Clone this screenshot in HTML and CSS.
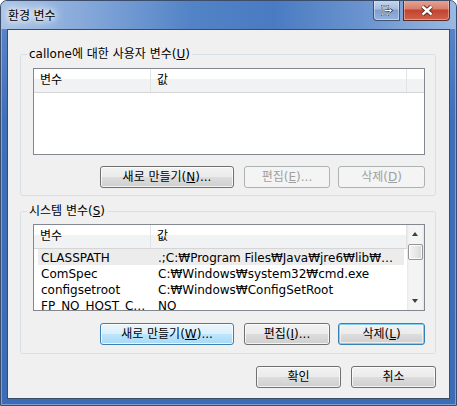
FILE: index.html
```html
<!DOCTYPE html>
<html lang="ko">
<head>
    <meta charset="UTF-8">
    <title>환경 변수</title>
    <link rel="stylesheet" href="styles.css">
</head>
<body>
    <div class="window">
        <div class="titlebar">
            <span class="title">환경 변수</span>
            <div class="caption">
                <button class="cap cap-extra">
                    <svg width="12" height="11" viewBox="0 0 12 11">
                        <rect x="1" y="1" width="6" height="9" fill="none" stroke="#2b3a52" stroke-width="2"/>
                        <rect x="1" y="1" width="6" height="9" fill="none" stroke="#fff" stroke-width="1"/>
                        <path d="M4 5.5 H10 M8 3.5 L10.5 5.5 L8 7.5" fill="none" stroke="#2b3a52" stroke-width="2.2"/>
                        <path d="M4 5.5 H10 M8 3.5 L10.5 5.5 L8 7.5" fill="none" stroke="#fff" stroke-width="1"/>
                    </svg>
                </button>
                <button class="cap cap-close">
                    <svg width="14" height="11" viewBox="0 0 14 11">
                        <path d="M2.5 1.5 L11.5 9.5 M11.5 1.5 L2.5 9.5" stroke="#4a1e18" stroke-width="4.2"/>
                        <path d="M2.5 1.5 L11.5 9.5 M11.5 1.5 L2.5 9.5" stroke="#fff" stroke-width="2.4"/>
                    </svg>
                </button>
            </div>
        </div>

        <div class="client">
            <fieldset class="group">
                <legend>callone에 대한 사용자 변수(<u>U</u>)</legend>
                <div class="listbox">
                    <div class="list-main">
                        <div class="list-header">
                            <span class="hcol hcol-name">변수</span>
                            <span class="hcol hcol-value">값</span>
                            <span class="hcol hcol-rest"></span>
                        </div>
                    </div>
                </div>
                <div class="btn-row">
                    <button class="btn btn-new">새로 만들기(<u>N</u>)...</button>
                    <button class="btn btn-edit" disabled>편집(<u>E</u>)...</button>
                    <button class="btn btn-del" disabled>삭제(<u>D</u>)</button>
                </div>
            </fieldset>

            <fieldset class="group group-system">
                <legend>시스템 변수(<u>S</u>)</legend>
                <div class="listbox">
                    <div class="list-main">
                        <div class="list-header">
                            <span class="hcol hcol-name">변수</span>
                            <span class="hcol hcol-value">값</span>
                        </div>
                        <div class="rows">
                            <div class="row selected"><span class="cell cell-name">CLASSPATH</span><span class="cell cell-value">.;C:₩Program Files₩Java₩jre6₩lib₩ext₩QTJava.zip</span></div>
                            <div class="row"><span class="cell cell-name">ComSpec</span><span class="cell cell-value">C:₩Windows₩system32₩cmd.exe</span></div>
                            <div class="row"><span class="cell cell-name">configsetroot</span><span class="cell cell-value">C:₩Windows₩ConfigSetRoot</span></div>
                            <div class="row"><span class="cell cell-name">FP_NO_HOST_CHECK</span><span class="cell cell-value">NO</span></div>
                        </div>
                    </div>
                    <div class="scrollbar">
                        <div class="sb-arrow sb-up"></div>
                        <div class="sb-track"><div class="sb-thumb"></div></div>
                        <div class="sb-arrow sb-down"></div>
                    </div>
                </div>
                <div class="btn-row">
                    <button class="btn btn-new hover">새로 만들기(<u>W</u>)...</button>
                    <button class="btn btn-edit">편집(<u>I</u>)...</button>
                    <button class="btn btn-del default">삭제(<u>L</u>)</button>
                </div>
            </fieldset>

            <div class="dialog-buttons">
                <button class="btn btn-dialog">확인</button>
                <button class="btn btn-dialog">취소</button>
            </div>
        </div>
    </div>
</body>
</html>
```

FILE: styles.css
```css
* {
    box-sizing: border-box;
}
body {
    margin: 0;
    font-family: "DejaVu Sans", "Noto Sans CJK KR", sans-serif;
    font-size: 12px;
}

/* window frame */
.window {
    width: 457px;
    height: 406px;
    display: flex;
    flex-direction: column;
    border: 1px solid #3b4d6b;
    border-radius: 7px 7px 0 0;
    background: linear-gradient(#5f8acb, #3f6fb9 30%, #3d6cb6);
    box-shadow: inset 0 0 0 1px rgba(255,255,255,.35);
    overflow: hidden;
}
.titlebar {
    height: 28px;
    flex: none;
    display: flex;
    align-items: flex-start;
    justify-content: space-between;
    padding: 0 6px 0 7px;
    background: linear-gradient(90deg, #a9c3e6 0%, #86a9da 18%, #5283c6 42%, #4a7bc2 60%, #6f97d0 82%, #9ab9e2 100%);
}
.title {
    margin-top: 7px;
    line-height: 14px;
    font-family: "Noto Sans CJK KR", sans-serif;
    color: #000;
    text-shadow: 0 0 4px #fff, 0 0 8px #fff, 0 0 12px #fff, 0 0 14px rgba(255,255,255,.8);
}
.caption {
    display: flex;
    gap: 3px;
    margin-top: -1px;
}
.cap {
    height: 21px;
    padding: 0;
    border: 1px solid #3e5272;
    border-top: none;
    display: flex;
    align-items: center;
    justify-content: center;
}
.cap-extra {
    width: 27px;
    border-radius: 0 0 0 4px;
    background: linear-gradient(#c9d8ee, #a6bde0 45%, #7f9fd0 50%, #95b2dd);
    box-shadow: inset 0 0 0 1px rgba(255,255,255,.4);
}
.cap-close {
    width: 47px;
    border-color: #5b2a24;
    border-radius: 0 0 4px 0;
    background: linear-gradient(#e8a796, #d77e6b 45%, #c2432f 50%, #d0624c);
    box-shadow: inset 0 0 0 1px rgba(255,220,210,.45);
}

/* client area */
.client {
    flex: 1;
    margin: 0 6px 6px;
    border: 1px solid #3a4c66;
    background: #f0f0f0;
    display: flex;
    flex-direction: column;
}
.group {
    margin: 17px 13px 0 12px;
    padding: 7px 10px 7px 6px;
    border: 1px solid #d5dfe5;
    border-radius: 3px;
    min-width: 0;
}
.group-system {
    margin-top: 8px;
    padding-top: 6px;
    padding-bottom: 8px;
}
.group legend {
    padding: 0 2px;
    line-height: 14px;
    color: #000;
}

/* list view */
.listbox {
    height: 87px;
    margin-left: 6px;
    border: 1px solid #828790;
    background: #fff;
    display: flex;
    overflow: hidden;
}
.list-main {
    flex: 1;
    min-width: 0;
    display: flex;
    flex-direction: column;
}
.list-header {
    height: 24px;
    flex: none;
    display: flex;
    border-bottom: 1px solid #d5d5d5;
    background: linear-gradient(#fff 0, #fff 10px, #f1f2f4 10px, #f1f2f4 100%);
}
.hcol {
    line-height: 22px;
    padding-left: 6px;
    border-right: 1px solid #e2e3e5;
    white-space: nowrap;
}
.hcol-name {
    width: 117px;
}
.hcol-value {
    width: 256px;
}
.hcol-rest {
    flex: 1;
    border-right: none;
}
.rows {
    overflow: hidden;
}
.row {
    display: flex;
    height: 16px;
    margin-left: 4px;
    width: 366px;
    line-height: 18px;
}
.row.selected {
    background: #ececec;
}
.cell {
    white-space: nowrap;
    overflow: hidden;
    text-overflow: ellipsis;
}
.cell-name {
    width: 113px;
    padding: 0 4px 0 3px;
}
.cell-value {
    width: 253px;
    padding: 0 4px 0 7px;
}

/* scrollbar */
.scrollbar {
    width: 17px;
    flex: none;
    display: flex;
    flex-direction: column;
    background: linear-gradient(90deg, #e6e6e6, #f4f4f4 2px, #f4f4f4 15px, #e6e6e6);
}
.sb-arrow {
    height: 17px;
    position: relative;
}
.sb-up {
    height: 18px;
}
.sb-arrow::after {
    content: "";
    position: absolute;
    left: 5px;
    top: 7px;
    border-left: 3.5px solid transparent;
    border-right: 3.5px solid transparent;
}
.sb-up::after {
    border-bottom: 4px solid #404040;
}
.sb-down::after {
    top: 6px;
    border-top: 4px solid #404040;
}
.sb-track {
    flex: 1;
    padding-top: 1px;
}
.sb-thumb {
    height: 16px;
    margin: 0 1px;
    border: 1px solid #959595;
    border-radius: 2px;
    background: linear-gradient(90deg, #f3f3f3, #e8e8e8 50%, #d8d8d8);
    box-shadow: inset 0 0 0 1px rgba(255,255,255,.8);
}

/* buttons */
.btn-row {
    display: flex;
    justify-content: flex-end;
    margin-top: 11px;
}
.group-system .btn-row {
    margin-top: 12px;
}
.btn {
    height: 22px;
    padding: 0;
    border: 1px solid #707070;
    border-radius: 3px;
    background: linear-gradient(#f2f2f2 0%, #ebebeb 50%, #dddddd 50%, #cfcfcf 100%);
    box-shadow: inset 0 0 0 1px rgba(255,255,255,.75);
    font-family: "DejaVu Sans", "Noto Sans CJK KR", sans-serif;
    font-size: 12px;
    line-height: 18px;
    color: #000;
}
.btn u {
    text-underline-offset: 1px;
}
.btn-new {
    width: 134px;
}
.btn-edit {
    width: 86px;
    margin-left: 10px;
}
.btn-del {
    width: 87px;
    margin-left: 8px;
}
.btn:disabled {
    border-color: #adb2b5;
    background: #f4f4f4;
    box-shadow: none;
    color: #a0a0a0;
}
.btn.hover {
    border-color: #3c7fb1;
    background: linear-gradient(#eaf6fd 0%, #d9f0fc 50%, #bee6fd 50%, #a7d9f5 100%);
}
.btn.default {
    border-color: #3c7fb1;
    box-shadow: inset 0 0 0 1px #7fd0f5, inset 0 0 0 2px rgba(255,255,255,.6);
}
.dialog-buttons {
    display: flex;
    justify-content: flex-end;
    gap: 10px;
    margin: 12px 13px 0 0;
}
.btn-dialog {
    width: 85px;
}
```
